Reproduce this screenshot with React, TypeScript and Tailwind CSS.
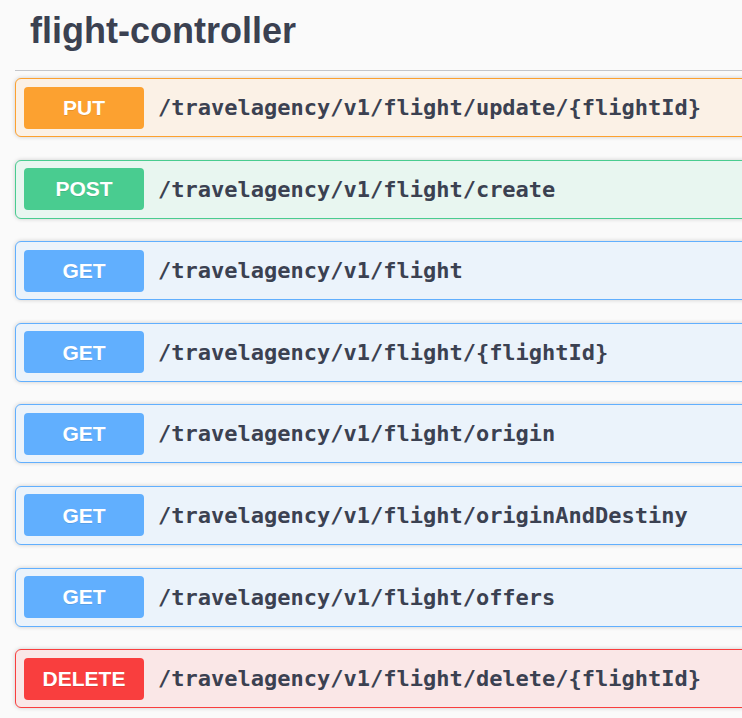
import React from "react";

type Op = { method: string; path: string };

const ops: Op[] = [
  { method: "PUT", path: "/travelagency/v1/flight/update/{flightId}" },
  { method: "POST", path: "/travelagency/v1/flight/create" },
  { method: "GET", path: "/travelagency/v1/flight" },
  { method: "GET", path: "/travelagency/v1/flight/{flightId}" },
  { method: "GET", path: "/travelagency/v1/flight/origin" },
  { method: "GET", path: "/travelagency/v1/flight/originAndDestiny" },
  { method: "GET", path: "/travelagency/v1/flight/offers" },
  { method: "DELETE", path: "/travelagency/v1/flight/delete/{flightId}" },
];

const styles: Record<string, { box: string; badge: string }> = {
  PUT: { box: "border-[#fca130] bg-[#fbf1e6]", badge: "bg-[#fca130]" },
  POST: { box: "border-[#49cc90] bg-[#e8f6f0]", badge: "bg-[#49cc90]" },
  GET: { box: "border-[#61affe] bg-[#ebf3fb]", badge: "bg-[#61affe]" },
  DELETE: { box: "border-[#f93e3e] bg-[#fae7e7]", badge: "bg-[#f93e3e]" },
};

function Row({ op }: { op: Op }) {
  const s = styles[op.method];
  return (
    <div
      className={`flex h-[59px] items-center rounded-[6px] border px-[8px] shadow-[0_0_4px_rgba(0,0,0,0.19)] ${s.box}`}
    >
      <div
        className={`flex h-[42px] w-[120px] shrink-0 items-center justify-center rounded-[4px] text-[21px] font-bold text-white [text-shadow:0_1px_0_rgba(0,0,0,0.1)] ${s.badge}`}
        style={{ fontFamily: '"Liberation Sans", Arial, sans-serif' }}
      >
        {op.method}
      </div>
      <div
        className="pl-[14px] text-[22px] font-bold whitespace-nowrap text-[#3b4151]"
        style={{ fontFamily: '"DejaVu Sans Mono", monospace' }}
      >
        {op.path}
      </div>
    </div>
  );
}

export default function App() {
  return (
    <div className="h-[718px] w-[742px] overflow-hidden bg-[#fafafa]">
      <div className="w-[780px] pl-[15px]">
        <div className="border-b border-[#c4c6ca] pt-[10px] pb-[19px] pl-[15px]">
          <h3
            className="text-[36px] leading-[41px] font-bold text-[#3b4151]"
            style={{ fontFamily: '"Liberation Sans", Arial, sans-serif' }}
          >
            flight-controller
          </h3>
        </div>
        <div className="mt-[7px] flex flex-col gap-[22.6px]">
          {ops.map((op, i) => (
            <Row key={i} op={op} />
          ))}
        </div>
      </div>
    </div>
  );
}
